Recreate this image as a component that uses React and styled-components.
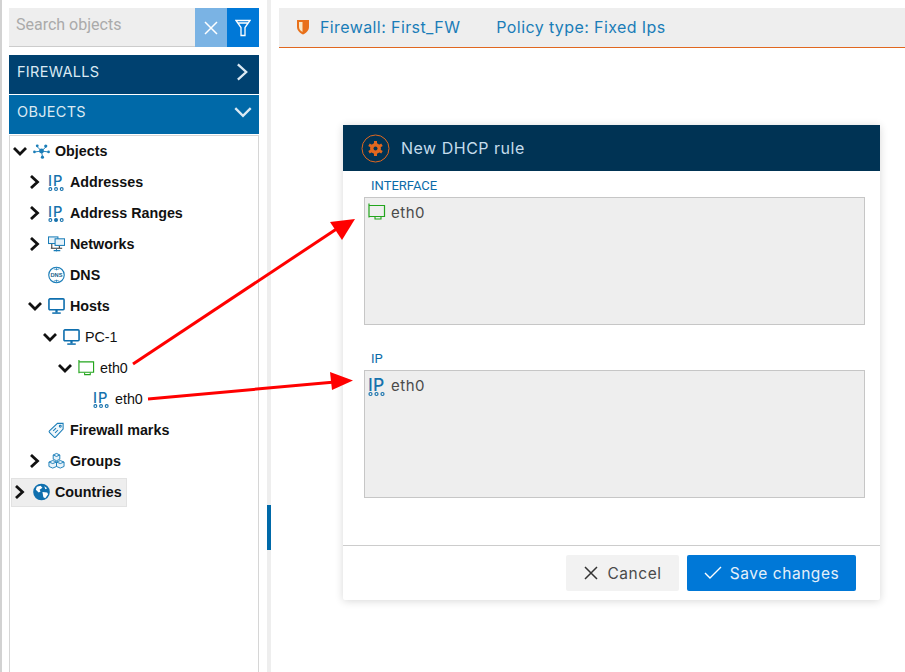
import React from "react";
import styled, { createGlobalStyle } from "styled-components";

const GlobalStyle = createGlobalStyle`
  html, body {
    margin: 0;
    padding: 0;
    height: 100%;
    background: #fff;
    overflow: hidden;
  }
  * {
    box-sizing: border-box;
  }
`;

const Page = styled.div`
  position: relative;
  display: flex;
  width: 905px;
  height: 672px;
  border-left: 2px solid #d2d2d2;
  font-family: "Inter", "Liberation Sans", sans-serif;
`;

const Sidebar = styled.aside`
  display: flex;
  flex-direction: column;
  width: 250px;
  margin-left: 7px;
  padding-top: 8px;
  flex-shrink: 0;
`;

const SearchBar = styled.div`
  display: flex;
  height: 39px;
  margin-bottom: 8px;
`;

const SearchInput = styled.div`
  flex: 1;
  padding: 8px 7px 0;
  background: #eee;
  border-bottom: 1px solid #ccc;
  color: #aaa;
  font-family: "Roboto", sans-serif;
  font-size: 16px;
  line-height: 18px;
`;

const SearchButton = styled.div`
  display: flex;
  align-items: center;
  justify-content: center;
  width: 32px;
  background: ${(p) => (p.$light ? "#7ab3e4" : "#0078d7")};
`;

const AccordionBar = styled.div`
  display: flex;
  align-items: center;
  justify-content: space-between;
  height: 39px;
  margin-bottom: 1px;
  padding: 0 7px 6px 8px;
  background: ${(p) => p.$bg};
  color: #dbe9f3;
  font-family: "Inter", sans-serif;
  font-size: 14.5px;
  letter-spacing: 0.3px;
`;

const TreePanel = styled.div`
  flex: 1;
  display: flex;
  flex-direction: column;
  border: 1px solid #d6d6d6;
  border-bottom: none;
  font-family: "Liberation Sans", Arial, sans-serif;
  font-size: 14.3px;
  color: #111;
`;

const Row = styled.div`
  display: flex;
  align-items: center;
  height: 31px;
  padding-bottom: 2px;
  padding-left: ${(p) => p.$level * 15}px;
  font-weight: ${(p) => (p.$bold ? 700 : 400)};
`;

const HighlightRow = styled(Row)`
  width: 116px;
  height: 29px;
  margin: 1px 0 0 1px;
  background: #eee;
  border: 1px solid #e2e2e2;
`;

const Toggle = styled.span`
  display: flex;
  align-items: center;
  justify-content: center;
  width: ${(p) => (p.$compact ? 16 : 20)}px;
  margin-right: ${(p) => (p.$compact ? 5 : 3)}px;
  flex-shrink: 0;
`;

const IconSlot = styled.span`
  display: flex;
  align-items: center;
  justify-content: center;
  width: 17px;
  height: 22px;
  margin-right: 5px;
  flex-shrink: 0;
`;

const Splitter = styled.div`
  position: relative;
  width: 4px;
  margin-left: 8px;
  background: #eee;
  flex-shrink: 0;
`;

const SplitterHandle = styled.div`
  position: absolute;
  top: 505px;
  left: 0;
  width: 4px;
  height: 45px;
  background: #0069a8;
`;

const Main = styled.main`
  flex: 1;
  display: flex;
  flex-direction: column;
  padding: 8px 0 0 8px;
`;

const TopBar = styled.div`
  display: flex;
  align-items: center;
  height: 40px;
  padding: 0 0 1px 17px;
  background: #eee;
  border-bottom: 1px solid #e0671f;
  color: #1a7db8;
  font-size: 16px;
  letter-spacing: 0.4px;
`;

const TopLabel = styled.span`
  margin-right: 36px;
  margin-left: ${(p) => (p.$first ? "10px" : "0")};
`;

const Dialog = styled.section`
  display: flex;
  flex-direction: column;
  width: 537px;
  height: 475px;
  margin: 77px 0 0 64px;
  background: #fff;
  border-radius: 2px;
  box-shadow: 0 1px 8px rgba(0, 0, 0, 0.16);
`;

const DialogHeader = styled.header`
  display: flex;
  align-items: center;
  gap: 11px;
  height: 46px;
  padding-left: 18px;
  background: #003354;
  color: #c4dcec;
  font-size: 16px;
  letter-spacing: 0.5px;
`;

const DialogBody = styled.div`
  flex: 1;
  padding: 8px 15px 0 21px;
`;

const FieldLabel = styled.div`
  height: 18px;
  padding-left: 7px;
  color: #0a6ba8;
  font-family: "Roboto", sans-serif;
  font-size: 13px;
  line-height: 14px;
`;

const DropBox = styled.div`
  display: flex;
  align-items: flex-start;
  height: 128px;
  margin-bottom: 27px;
  padding: 5px 3px;
  background: #eee;
  border: 1px solid #c6c6c6;
  color: #4a4a4a;
  font-size: 15px;
  letter-spacing: 0.5px;
`;

const DropIcon = styled.span`
  display: flex;
  width: 18px;
  height: 22px;
  margin-right: 5px;
  margin-top: ${(p) => p.$top || 0}px;
`;

const DialogFooter = styled.footer`
  display: flex;
  justify-content: flex-end;
  gap: 8px;
  height: 55px;
  padding: 9px 24px 0 0;
  border-top: 1px solid #ccc;
`;

const Button = styled.button`
  display: flex;
  align-items: center;
  justify-content: center;
  gap: 8px;
  width: ${(p) => p.$width}px;
  height: 36px;
  padding: 0;
  border: none;
  border-radius: 2px;
  background: ${(p) => (p.$primary ? "#0078d7" : "#f2f2f2")};
  color: ${(p) => (p.$primary ? "#e4f0fa" : "#4a4a4a")};
  font-family: "Inter", sans-serif;
  font-size: 15.5px;
  letter-spacing: 0.55px;
`;

const ArrowLayer = styled.svg`
  position: absolute;
  top: 0;
  left: -2px;
  pointer-events: none;
`;

const Chevron = ({ dir = "right", color = "#111", size = 14, width = 2.8 }) => (
  <svg width={size} height={size} viewBox="0 0 14 14" fill="none">
    <polyline
      points={dir === "right" ? "3,1 9.5,7 3,13" : "1,4 7,10 13,4"}
      stroke={color}
      strokeWidth={width}
    />
  </svg>
);

const IpIcon = ({ linked, large }) => (
  <svg width="18" height="24" viewBox="0 0 18 24">
    <text
      x="0"
      y={large ? 17 : 16.5}
      fill="#1672ad"
      fontFamily="Inter, sans-serif"
      fontSize={large ? 17.5 : 15.5}
      fontWeight="500"
      letterSpacing={large ? 0.2 : 1}
    >
      IP
    </text>
    <g fill="none" stroke="#1672ad" strokeWidth="1.2">
      <circle cx="2.5" cy={large ? 20 : 19.5} r="1.5" />
      <circle cx="8.5" cy={large ? 20 : 19.5} r="1.5" fill={linked ? "#1672ad" : "none"} />
      <circle cx="14.5" cy={large ? 20 : 19.5} r="1.5" />
    </g>
  </svg>
);

const NetworkIcon = () => (
  <svg width="18" height="18" viewBox="0 0 18 18" fill="none" stroke="#1a7db8" strokeWidth="1.1">
    <rect x="0.5" y="1.5" width="10" height="7" fill="#e8f3fa" />
    <rect x="7.5" y="3.5" width="10" height="7" fill="#e8f3fa" />
    <path d="M4 9v4M12 11v2M3 13.5h12" stroke="#333" />
    <path d="M6 16h7M9 14v3" stroke="#1a7db8" />
  </svg>
);

const ObjectsIcon = () => (
  <svg width="18" height="18" viewBox="0 0 18 18" fill="#1a7db8" stroke="#1a7db8">
    <path d="M9 9L4 4M9 9l5-4.5M9 9l-7 1M9 9l7 1M9 9l1 6" strokeWidth="1" />
    <circle cx="9" cy="9" r="2.6" stroke="none" />
    <circle cx="4.5" cy="3.5" r="1.5" stroke="none" />
    <circle cx="13.5" cy="3.8" r="1.7" stroke="none" />
    <circle cx="1.5" cy="10" r="1.4" stroke="none" />
    <circle cx="16.5" cy="10" r="1.4" stroke="none" />
    <circle cx="10" cy="15.5" r="1.7" stroke="none" />
  </svg>
);

const DnsIcon = () => (
  <svg width="18" height="18" viewBox="0 0 18 18" fill="none">
    <circle cx="9" cy="9" r="8.2" stroke="#1a7db8" strokeWidth="1.2" />
    <path d="M9 1v3M9 14v3M6 2.5Q9 4 12 2.5M6 15.5Q9 14 12 15.5" stroke="#1a7db8" strokeWidth="0.8" />
    <text x="9" y="11" textAnchor="middle" fill="#1a5f8a" fontFamily="Liberation Sans, sans-serif" fontSize="6" fontWeight="700">
      DNS
    </text>
  </svg>
);

const MonitorIcon = () => (
  <svg width="18" height="18" viewBox="0 0 18 18" fill="none">
    <rect x="1" y="1.5" width="16" height="11.5" rx="1" stroke="#0f6fae" strokeWidth="1.7" />
    <path d="M9 13v3" stroke="#0f6fae" strokeWidth="2.4" />
    <path d="M4.5 16.5h9" stroke="#0f6fae" strokeWidth="1.6" />
  </svg>
);

const InterfaceIcon = () => (
  <svg width="18" height="18" viewBox="0 0 18 18" fill="none" stroke="#22a51c">
    <path d="M1 0.5v14M1 2.5h15.5v11H1" strokeWidth="1.2" />
    <path d="M7 14v2h6v-2" strokeWidth="1.1" />
  </svg>
);

const TagIcon = () => (
  <svg width="18" height="18" viewBox="0 0 18 18" fill="none" stroke="#1a7db8" strokeWidth="1.1">
    <path d="M10 2h6v6L8 16.5a1 1 0 0 1-1.4 0L1.5 11.4a1 1 0 0 1 0-1.4Z" fill="#eef6fb" />
    <circle cx="13" cy="5" r="1" />
    <path d="M5.5 10l3-3M7.5 12l3-3" />
  </svg>
);

const GroupsIcon = () => (
  <svg width="18" height="18" viewBox="0 0 18 18" fill="#e8f3fa" stroke="#1a7db8" strokeWidth="1">
    <path d="M9 1l3.5 1.6v4.5L9 8.7 5.5 7.1V2.6Z" />
    <path d="M5 8.5l4 1.6v4.7l-4 1.7-4-1.7v-4.7Z" />
    <path d="M13 8.5l4 1.6v4.7l-4 1.7-4-1.7v-4.7Z" />
    <path d="M5.5 2.6L9 4.2l3.5-1.6M1 10.1l4 1.6 4-1.6M9 10.1l4 1.6 4-1.6" fill="none" />
  </svg>
);

const GlobeIcon = () => (
  <svg width="18" height="18" viewBox="0 0 18 18">
    <circle cx="9" cy="9" r="8.8" fill="#0f6fae" />
    <path d="M4 3.5l4-1 2 2-3 2 1 2-2 1-3-3ZM10 9l5 .5 1 2-3 4-2-1ZM12 3l3 2-2 1Z" fill="#fff" />
  </svg>
);

const ShieldIcon = () => (
  <svg width="14" height="16" viewBox="0 0 14 16">
    <path d="M1 1h12v7c0 3.5-3 6-6 7.5C4 14 1 11.5 1 8Z" fill="#e8701a" />
    <path d="M3 3h3.5v10C4.5 12 3 10 3 8Z" fill="#f8e8c8" />
  </svg>
);

const GearBadge = () => (
  <svg width="29" height="29" viewBox="0 0 29 29" fill="none">
    <circle cx="14.5" cy="14.5" r="13.5" stroke="#e0671f" />
    <g stroke="#e0671f" strokeWidth="3">
      <path d="M14.5 7v15M8 10.8l13 7.4M8 18.2l13-7.4" />
    </g>
    <circle cx="14.5" cy="14.5" r="5.4" fill="#e0671f" />
    <circle cx="14.5" cy="14.5" r="2" fill="#003354" />
  </svg>
);

const treeRows = [
  { level: 0, open: true, bold: true, icon: <ObjectsIcon />, label: "Objects" },
  { level: 1, open: false, bold: true, icon: <IpIcon />, label: "Addresses" },
  { level: 1, open: false, bold: true, icon: <IpIcon linked />, label: "Address Ranges" },
  { level: 1, open: false, bold: true, icon: <NetworkIcon />, label: "Networks" },
  { level: 1, bold: true, icon: <DnsIcon />, label: "DNS" },
  { level: 1, open: true, bold: true, icon: <MonitorIcon />, label: "Hosts" },
  { level: 2, open: true, icon: <MonitorIcon />, label: "PC-1" },
  { level: 3, open: true, icon: <InterfaceIcon />, label: "eth0" },
  { level: 4, icon: <IpIcon />, label: "eth0" },
  { level: 1, bold: true, icon: <TagIcon />, label: "Firewall marks" },
  { level: 1, open: false, bold: true, icon: <GroupsIcon />, label: "Groups" },
];

const App = () => {
  return (
    <Page>
      <GlobalStyle />
      <Sidebar>
        <SearchBar>
          <SearchInput>Search objects</SearchInput>
          <SearchButton $light>
            <svg width="16" height="16" viewBox="0 0 16 16" stroke="#fff" strokeWidth="1.5">
              <path d="M2 2l12 12M14 2L2 14" />
            </svg>
          </SearchButton>
          <SearchButton>
            <svg width="16" height="18" viewBox="0 0 16 18" fill="none" stroke="#fff" strokeWidth="1.3">
              <path d="M1 1.5h14l-5 7v8H6v-8ZM3 4h10" />
            </svg>
          </SearchButton>
        </SearchBar>

        <AccordionBar $bg="#004170">
          FIREWALLS
          <Chevron color="#dbe9f3" size={18} width={1.8} />
        </AccordionBar>
        <AccordionBar $bg="#0069a8">
          OBJECTS
          <Chevron dir="down" color="#dbe9f3" size={18} width={1.8} />
        </AccordionBar>

        <TreePanel>
          {treeRows.map((row, i) => (
            <Row key={i} $level={row.level} $bold={row.bold}>
              <Toggle>{row.open !== undefined && <Chevron dir={row.open ? "down" : "right"} />}</Toggle>
              <IconSlot>{row.icon}</IconSlot>
              {row.label}
            </Row>
          ))}
          <HighlightRow $level={0} $bold>
            <Toggle $compact>
              <Chevron />
            </Toggle>
            <IconSlot>
              <GlobeIcon />
            </IconSlot>
            Countries
          </HighlightRow>
        </TreePanel>
      </Sidebar>

      <Splitter>
        <SplitterHandle />
      </Splitter>

      <Main>
        <TopBar>
          <ShieldIcon />
          <TopLabel $first>Firewall: First_FW</TopLabel>
          <TopLabel>Policy type: Fixed Ips</TopLabel>
        </TopBar>

        <Dialog>
          <DialogHeader>
            <GearBadge />
            New DHCP rule
          </DialogHeader>
          <DialogBody>
            <FieldLabel>INTERFACE</FieldLabel>
            <DropBox>
              <DropIcon>
                <InterfaceIcon />
              </DropIcon>
              eth0
            </DropBox>
            <FieldLabel>IP</FieldLabel>
            <DropBox>
              <DropIcon $top={-2}>
                <IpIcon large />
              </DropIcon>
              eth0
            </DropBox>
          </DialogBody>
          <DialogFooter>
            <Button $width={113}>
              <svg width="16" height="16" viewBox="0 0 16 16" stroke="#333" strokeWidth="1.5">
                <path d="M2 2l12 12M14 2L2 14" />
              </svg>
              Cancel
            </Button>
            <Button $primary $width={169}>
              <svg width="18" height="14" viewBox="0 0 18 14" fill="none" stroke="#fff" strokeWidth="1.4">
                <path d="M1 7l5 5L17 1" />
              </svg>
              Save changes
            </Button>
          </DialogFooter>
        </Dialog>
      </Main>

      <ArrowLayer width="905" height="672" viewBox="0 0 905 672">
        <path d="M133 364L338 228" stroke="#f00" strokeWidth="3" />
        <path d="M330 222L355 219L342 240Z" fill="#f00" />
        <path d="M148 399L335 382" stroke="#f00" strokeWidth="3" />
        <path d="M330 372L353 380.5L332 390Z" fill="#f00" />
      </ArrowLayer>
    </Page>
  );
};

export default App;
